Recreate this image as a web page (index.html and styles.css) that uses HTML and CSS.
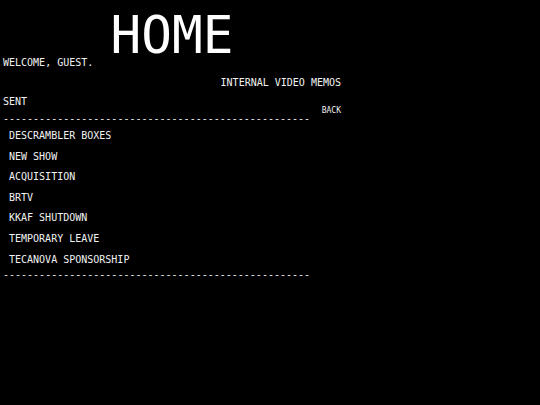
FILE: index.html
```html
<!DOCTYPE html>
<html lang="en">
<head>
<meta charset="utf-8">
<title>Home</title>
<link rel="stylesheet" href="styles.css">
</head>
<body>
<main class="page">
  <header class="masthead">
    <h1 class="title">HOME</h1>
    <p class="welcome">WELCOME, GUEST.</p>
  </header>

  <section class="memos">
    <h2 class="memos-title">INTERNAL VIDEO MEMOS</h2>
    <div class="folder">
      <div class="folder-main">
        <div class="folder-name">SENT</div>
        <div class="rule rule-top">---------------------------------------------------</div>
        <ul class="memo-list">
          <li><a class="memo" href="#">DESCRAMBLER BOXES</a></li>
          <li><a class="memo" href="#">NEW SHOW</a></li>
          <li><a class="memo" href="#">ACQUISITION</a></li>
          <li><a class="memo" href="#">BRTV</a></li>
          <li><a class="memo" href="#">KKAF SHUTDOWN</a></li>
          <li><a class="memo" href="#">TEMPORARY LEAVE</a></li>
          <li><a class="memo" href="#">TECANOVA SPONSORSHIP</a></li>
        </ul>
        <div class="rule rule-bottom">---------------------------------------------------</div>
      </div>
      <a class="back" href="#">BACK</a>
    </div>
  </section>
</main>
</body>
</html>
```

FILE: styles.css
```css
html, body {
  margin: 0;
  padding: 0;
  background: #000;
}

body {
  color: #f2f2f2;
  font-family: "DejaVu Sans Mono", "Liberation Mono", monospace;
  font-size: 10px;
  line-height: 12px;
}

.page {
  width: 338px;
  padding-left: 3px;
}

.title {
  margin: 16px 0 0;
  font-size: 51px;
  line-height: 40px;
  font-weight: normal;
  text-align: center;
  color: #fff;
}

.welcome {
  margin: 1px 0 0;
}

.memos-title {
  margin: 8px 0 0;
  font-size: 10px;
  font-weight: normal;
  text-align: right;
}

.folder {
  display: flex;
  margin-top: 7px;
}

.folder-main {
  width: 307px;
}

.folder-name {
  line-height: 12px;
}

/* dashed separators are plain runs of hyphens */
.rule {
  white-space: nowrap;
  overflow: hidden;
  line-height: 12px;
}

.rule-top {
  margin-top: 5px;
}

.rule-bottom {
  margin-top: -1px;
}

.memo-list {
  list-style: none;
  margin: 1px 0 0;
  padding: 0 0 0 6px;
}

.memo-list li {
  line-height: 20.6px;
}

.memo,
.back {
  color: inherit;
  text-decoration: none;
}

.back {
  margin-left: auto;
  margin-top: 10px;
  font-size: 8px;
  line-height: 10px;
  align-self: flex-start;
}
```
